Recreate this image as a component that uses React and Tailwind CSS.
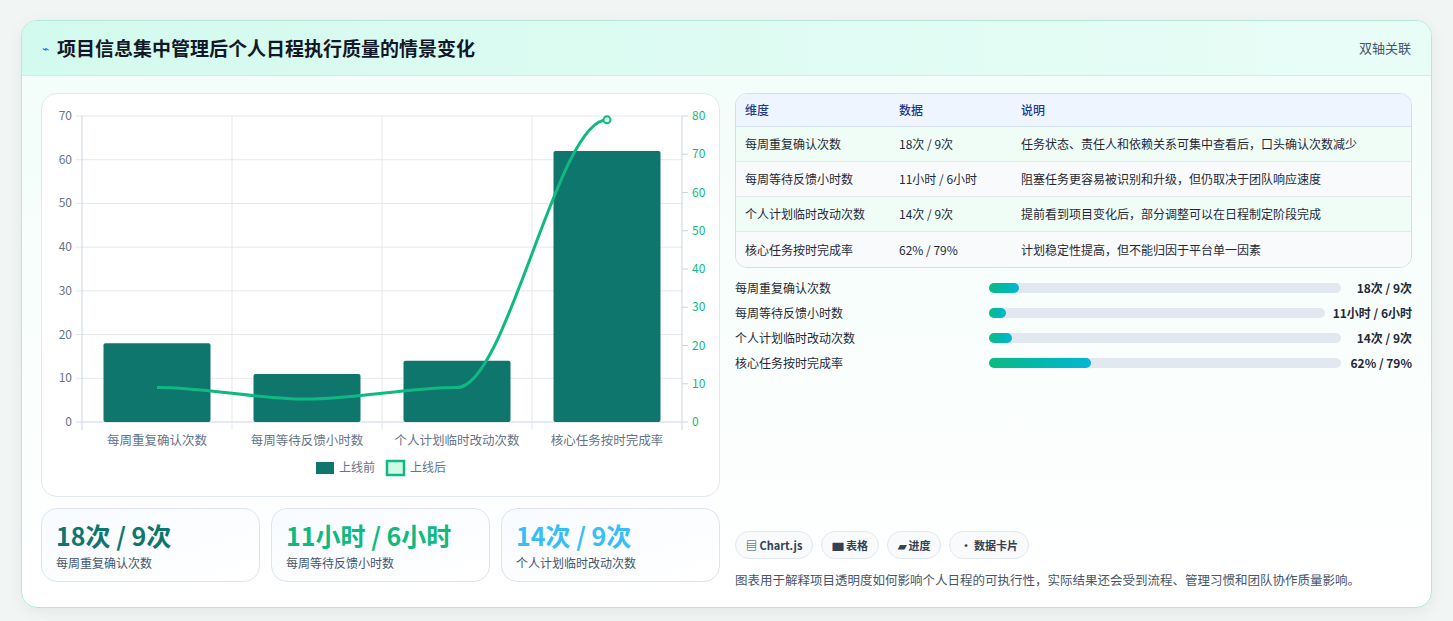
import React from 'react';

const rows = [
  { name: '每周重复确认次数', data: '18次 / 9次', note: '任务状态、责任人和依赖关系可集中查看后，口头确认次数减少', pct: 8.5, bg: 'bg-[#f0fdf7]' },
  { name: '每周等待反馈小时数', data: '11小时 / 6小时', note: '阻塞任务更容易被识别和升级，但仍取决于团队响应速度', pct: 5, bg: 'bg-[#f8fafc]' },
  { name: '个人计划临时改动次数', data: '14次 / 9次', note: '提前看到项目变化后，部分调整可以在日程制定阶段完成', pct: 6.5, bg: 'bg-[#f0fdf7]' },
  { name: '核心任务按时完成率', data: '62% / 79%', note: '计划稳定性提高，但不能归因于平台单一因素', pct: 29, bg: 'bg-[#f8fafc]' },
];

const cats = ['每周重复确认次数', '每周等待反馈小时数', '个人计划临时改动次数', '核心任务按时完成率'];
const before = [18, 11, 14, 62];
const after = [9, 6, 9, 79];

function Chart() {
  const x0 = 40, x1 = 640, top = 22, bot = 328;
  const yl = (v) => bot - (v / 70) * (bot - top);
  const yr = (v) => bot - (v / 80) * (bot - top);
  const cw = (x1 - x0) / 4;
  const pts = after.map((v, i) => [x0 + cw * i + cw / 2, yr(v)]);
  let d = `M${pts[0][0]},${pts[0][1]}`;
  for (let i = 0; i < 3; i++) {
    const [ax, ay] = pts[i], [bx, by] = pts[i + 1];
    const dx = (bx - ax) / 3;
    d += ` C${ax + dx},${i === 0 ? ay : ay + (ay - pts[i - 1][1]) * 0} ${bx - dx},${by} ${bx},${by}`;
  }
  return (
    <svg width="679" height="400" className="block">
      {[0, 10, 20, 30, 40, 50, 60, 70].map((v) => (
        <g key={v}>
          <line x1={x0 - 6} x2={x1} y1={yl(v)} y2={yl(v)} stroke={v === 0 ? '#cbd5e1' : '#e5e7eb'} />
          <text x={x0 - 10} y={yl(v) + 4} textAnchor="end" fontSize="12" fill="#64748b">{v}</text>
        </g>
      ))}
      {[0, 10, 20, 30, 40, 50, 60, 70, 80].map((v) => (
        <g key={v}>
          <line x1={x1} x2={x1 + 6} y1={yr(v)} y2={yr(v)} stroke="#cbd5e1" />
          <text x={x1 + 10} y={yr(v) + 4} fontSize="12" fill="#10b981">{v}</text>
        </g>
      ))}
      {[0, 1, 2, 3, 4].map((i) => (
        <line key={i} x1={x0 + cw * i} x2={x0 + cw * i} y1={top} y2={bot + 8} stroke={i === 0 || i === 4 ? '#cbd5e1' : '#e5e7eb'} />
      ))}
      {before.map((v, i) => (
        <rect key={i} x={x0 + cw * i + 21.5} y={yl(v)} width="107" height={bot - yl(v)} rx="2" fill="#0f766e" />
      ))}
      <path d={d} fill="none" stroke="#10b981" strokeWidth="3" />
      <circle cx={pts[3][0]} cy={pts[3][1]} r="3.5" fill="#d1fae5" stroke="#10b981" strokeWidth="2" />
      {cats.map((c, i) => (
        <text key={c} x={x0 + cw * i + cw / 2} y={bot + 23} textAnchor="middle" fontSize="12.5" fill="#64748b">{c}</text>
      ))}
      <rect x="274" y="368" width="18" height="12" fill="#0f766e" />
      <text x="297" y="378" fontSize="12" fill="#64748b">上线前</text>
      <rect x="345" y="367" width="17" height="14" fill="#d1fae5" stroke="#10b981" strokeWidth="2.5" />
      <text x="368" y="378" fontSize="12" fill="#64748b">上线后</text>
    </svg>
  );
}

export default function App() {
  return (
    <div className="min-h-[621px] bg-[#f1f5f4] pt-5 px-[21px]" style={{ fontFamily: '"Noto Sans CJK SC", "Noto Sans", sans-serif' }}>
      <div className="rounded-2xl border border-[#b5e8dc] bg-gradient-to-b from-[#f2fdf9] to-white shadow-[0_4px_16px_rgba(0,0,0,0.06)] overflow-hidden">
        <div className="h-[55px] flex items-center justify-between px-5 bg-gradient-to-r from-[#d3faee] to-[#e9fdf7] border-b border-[#cdeee6]">
          <div className="flex items-center gap-2">
            <span className="text-[#2563eb] text-xs">⌁</span>
            <h1 className="text-[19px] font-bold text-[#111827]">项目信息集中管理后个人日程执行质量的情景变化</h1>
          </div>
          <span className="text-[13px] text-[#475569]">双轴关联</span>
        </div>
        <div className="flex gap-[15px] px-[19px] pt-[17px] pb-[17px]">
          <div className="w-[679px] flex flex-col gap-[11px]">
            <div className="h-[404px] rounded-2xl border border-[#e2e8f0] bg-white overflow-hidden">
              <Chart />
            </div>
            <div className="grid grid-cols-3 gap-[11px]">
              {[['18次 / 9次', 'text-[#0f766e]', '每周重复确认次数'], ['11小时 / 6小时', 'text-[#10b981]', '每周等待反馈小时数'], ['14次 / 9次', 'text-[#38bdf8]', '个人计划临时改动次数']].map(([v, c, l]) => (
                <div key={l} className="h-[74px] rounded-2xl border border-[#dbe5f0] bg-gradient-to-br from-[#f8fbff] to-white px-[14px] pt-[9px]">
                  <div className={`text-[25px] font-bold leading-[34px] ${c}`}>{v}</div>
                  <div className="text-[12px] text-[#475569] mt-[2px]">{l}</div>
                </div>
              ))}
            </div>
          </div>
          <div className="flex-1 flex flex-col">
            <div className="rounded-xl border border-[#cfe0ea] overflow-hidden bg-white">
              <div className="flex h-[33px] items-center bg-[#eef5ff] border-b border-[#d6e2ee] text-[12px] text-[#1e3a8a] font-medium">
                <div className="w-[163px] pl-[9px]">维度</div>
                <div className="w-[122px]">数据</div>
                <div>说明</div>
              </div>
              {rows.map((r, i) => (
                <div key={r.name} className={`flex h-[35px] items-center text-[12px] text-[#1f2937] ${r.bg} ${i < 3 ? 'border-b border-[#e2e8f0]' : ''}`}>
                  <div className="w-[163px] pl-[9px]">{r.name}</div>
                  <div className="w-[122px]">{r.data}</div>
                  <div>{r.note}</div>
                </div>
              ))}
            </div>
            <div className="flex flex-col gap-[8px] mt-[11px]">
              {rows.map((r) => (
                <div key={r.name} className="flex items-center gap-2 h-[17px] text-[12px] text-[#1f2937]">
                  <div className="w-[246px] shrink-0">{r.name}</div>
                  <div className="flex-1 h-[10px] rounded-full bg-[#e2e8f0]">
                    <div className="h-full rounded-full bg-gradient-to-r from-[#10b981] to-[#06b6d4]" style={{ width: `${r.pct}%` }} />
                  </div>
                  <div className="shrink-0 font-bold min-w-[63px] text-right">{r.data}</div>
                </div>
              ))}
            </div>
            <div className="flex gap-2 mt-[160px]">
              {['▤ Chart.js', '▆ 表格', '▰ 进度', '• 数据卡片'].map((t) => (
                <span key={t} className="h-[28px] px-[10px] flex items-center rounded-full border border-[#e2e8f0] bg-[#f8fafc] text-[11px] font-semibold text-[#334155]">{t}</span>
              ))}
            </div>
            <p className="mt-[12px] text-[12.5px] text-[#475569]">图表用于解释项目透明度如何影响个人日程的可执行性，实际结果还会受到流程、管理习惯和团队协作质量影响。</p>
          </div>
        </div>
      </div>
    </div>
  );
}
